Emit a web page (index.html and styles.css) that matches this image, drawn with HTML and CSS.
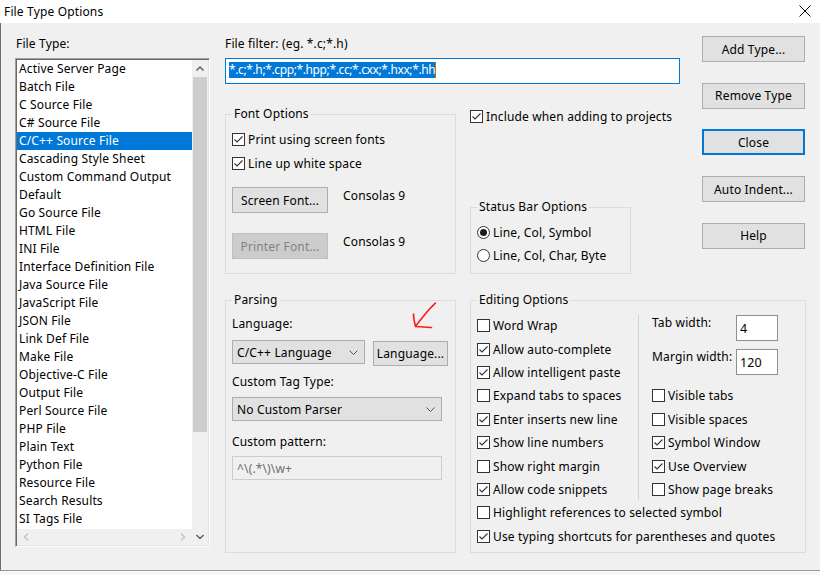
FILE: index.html
```html
<!DOCTYPE html>
<html>
<head>
<meta charset="utf-8">
<link rel="stylesheet" href="styles.css">
</head>
<body>
<div class="titlebar">
  <span class="title">File Type Options</span>
  <svg class="close" width="12" height="12" viewBox="0 0 12 12"><path d="M0.5 0.5 L11.5 11.5 M11.5 0.5 L0.5 11.5" stroke="#000" stroke-width="1" fill="none"/></svg>
</div>
<div class="main">
  <div class="col-left">
    <div class="lbl">File Type:</div>
    <div class="list">
      <div class="list-body">
        <div class="items">
          <div class="item">Active Server Page</div>
          <div class="item">Batch File</div>
          <div class="item">C Source File</div>
          <div class="item">C# Source File</div>
          <div class="item sel">C/C++ Source File</div>
          <div class="item">Cascading Style Sheet</div>
          <div class="item">Custom Command Output</div>
          <div class="item">Default</div>
          <div class="item">Go Source File</div>
          <div class="item">HTML File</div>
          <div class="item">INI File</div>
          <div class="item">Interface Definition File</div>
          <div class="item">Java Source File</div>
          <div class="item">JavaScript File</div>
          <div class="item">JSON File</div>
          <div class="item">Link Def File</div>
          <div class="item">Make File</div>
          <div class="item">Objective-C File</div>
          <div class="item">Output File</div>
          <div class="item">Perl Source File</div>
          <div class="item">PHP File</div>
          <div class="item">Plain Text</div>
          <div class="item">Python File</div>
          <div class="item">Resource File</div>
          <div class="item">Search Results</div>
          <div class="item">SI Tags File</div>
        </div>
        <div class="hscroll">
          <svg class="harrow" width="16" height="16" viewBox="0 0 16 16"><path d="M10 4.5 L6.5 8 L10 11.5" stroke="#c4c4c4" stroke-width="1.5" fill="none"/></svg>
          <svg class="harrow" width="16" height="16" viewBox="0 0 16 16"><path d="M6 4.5 L9.5 8 L6 11.5" stroke="#c4c4c4" stroke-width="1.5" fill="none"/></svg>
        </div>
      </div>
      <div class="vscroll">
        <svg class="vbtn up" width="16" height="17" viewBox="0 0 16 17"><path d="M4.5 10.5 L8 7 L11.5 10.5" stroke="#606060" stroke-width="1.5" fill="none"/></svg>
        <div class="thumb"></div>
        <div class="track"></div>
        <svg class="vbtn" width="16" height="16" viewBox="0 0 16 16"><path d="M4.5 6 L8 9.5 L11.5 6" stroke="#606060" stroke-width="1.5" fill="none"/></svg>
      </div>
    </div>
  </div>

  <div class="col-rest">
    <div class="rest-top">
      <div class="center-top">
        <div class="lbl">File filter: (eg. *.c;*.h)</div>
        <div class="filter"><span class="seltext">*.c;*.h;*.cpp;*.hpp;*.cc;*.cxx;*.hxx;*.hh</span></div>
        <div class="fo-row">
          <fieldset class="grp grp-font">
            <legend>Font Options</legend>
            <div class="chk fchk"><span class="cb"><svg viewBox="0 0 11 11"><path d="M1.5 5.5 L4 8 L9.5 2.5"/></svg></span>Print using screen fonts</div>
            <div class="chk fchk fchk2"><span class="cb"><svg viewBox="0 0 11 11"><path d="M1.5 5.5 L4 8 L9.5 2.5"/></svg></span>Line up white space</div>
            <div class="fontrow first">
              <div class="btn fbtn">Screen Font...</div>
              <span class="fontname">Consolas 9</span>
            </div>
            <div class="fontrow">
              <div class="btn fbtn disabled">Printer Font...</div>
              <span class="fontname">Consolas 9</span>
            </div>
          </fieldset>
          <div class="side">
            <div class="chk include"><span class="cb"><svg viewBox="0 0 11 11"><path d="M1.5 5.5 L4 8 L9.5 2.5"/></svg></span>Include when adding to projects</div>
            <fieldset class="grp grp-status">
              <legend>Status Bar Options</legend>
              <div class="chk radio"><span class="rb on"></span>Line, Col, Symbol</div>
              <div class="chk radio"><span class="rb"></span>Line, Col, Char, Byte</div>
            </fieldset>
          </div>
        </div>
      </div>
      <div class="buttons">
        <div class="btn rbtn">Add Type...</div>
        <div class="btn rbtn">Remove Type</div>
        <div class="btn rbtn default">Close</div>
        <div class="btn rbtn">Auto Indent...</div>
        <div class="btn rbtn">Help</div>
      </div>
    </div>

    <div class="rest-bottom">
      <fieldset class="grp grp-parse">
        <legend>Parsing</legend>
        <div class="plabel lang">Language:
          <svg class="annot" width="32" height="34" viewBox="0 0 32 34"><path d="M27.5 4 C25 6.5 22 9 18.5 13.5 C15 18 11 22.5 7.5 27.5 M5.5 15 C5.5 19 6.5 23.5 7.5 27.5 C12 27.5 17 28 23.5 28.5" stroke="#ff1a1a" stroke-width="1.6" fill="none" stroke-linecap="round" stroke-linejoin="round"/></svg>
        </div>
        <div class="langrow">
          <div class="combo combo-lang">C/C++ Language<svg class="chev" width="9" height="5" viewBox="0 0 9 5"><path d="M0.5 0.5 L4.5 4.5 L8.5 0.5" stroke="#555" stroke-width="1" fill="none"/></svg></div>
          <div class="btn langbtn">Language...</div>
        </div>
        <div class="plabel tag">Custom Tag Type:</div>
        <div class="combo combo-tag">No Custom Parser<svg class="chev" width="9" height="5" viewBox="0 0 9 5"><path d="M0.5 0.5 L4.5 4.5 L8.5 0.5" stroke="#555" stroke-width="1" fill="none"/></svg></div>
        <div class="plabel pat">Custom pattern:</div>
        <div class="pattern">^\(.*\)\w+</div>
      </fieldset>

      <fieldset class="grp grp-edit">
        <legend>Editing Options</legend>
        <div class="edit-top">
          <div class="edit-left">
            <div class="chk erow"><span class="cb"></span>Word Wrap</div>
            <div class="chk erow"><span class="cb"><svg viewBox="0 0 11 11"><path d="M1.5 5.5 L4 8 L9.5 2.5"/></svg></span>Allow auto-complete</div>
            <div class="chk erow"><span class="cb"><svg viewBox="0 0 11 11"><path d="M1.5 5.5 L4 8 L9.5 2.5"/></svg></span>Allow intelligent paste</div>
            <div class="chk erow"><span class="cb"></span>Expand tabs to spaces</div>
            <div class="chk erow"><span class="cb"><svg viewBox="0 0 11 11"><path d="M1.5 5.5 L4 8 L9.5 2.5"/></svg></span>Enter inserts new line</div>
            <div class="chk erow"><span class="cb"><svg viewBox="0 0 11 11"><path d="M1.5 5.5 L4 8 L9.5 2.5"/></svg></span>Show line numbers</div>
            <div class="chk erow"><span class="cb"></span>Show right margin</div>
            <div class="chk erow"><span class="cb"><svg viewBox="0 0 11 11"><path d="M1.5 5.5 L4 8 L9.5 2.5"/></svg></span>Allow code snippets</div>
          </div>
          <div class="vsep"></div>
          <div class="edit-right">
            <div class="numblock">
              <div class="numrow"><span class="numlbl">Tab width:</span><span class="num">4</span></div>
              <div class="numrow"><span class="numlbl">Margin width:</span><span class="num">120</span></div>
            </div>
            <div class="chk erow"><span class="cb"></span>Visible tabs</div>
            <div class="chk erow"><span class="cb"></span>Visible spaces</div>
            <div class="chk erow"><span class="cb"><svg viewBox="0 0 11 11"><path d="M1.5 5.5 L4 8 L9.5 2.5"/></svg></span>Symbol Window</div>
            <div class="chk erow"><span class="cb"><svg viewBox="0 0 11 11"><path d="M1.5 5.5 L4 8 L9.5 2.5"/></svg></span>Use Overview</div>
            <div class="chk erow"><span class="cb"></span>Show page breaks</div>
          </div>
        </div>
        <div class="chk erow"><span class="cb"></span>Highlight references to selected symbol</div>
        <div class="chk erow"><span class="cb"><svg viewBox="0 0 11 11"><path d="M1.5 5.5 L4 8 L9.5 2.5"/></svg></span>Use typing shortcuts for parentheses and quotes</div>
      </fieldset>
    </div>
  </div>
</div>
</body>
</html>
```

FILE: styles.css
```css
html, body {
  margin: 0;
  padding: 0;
}
body {
  width: 820px;
  height: 575px;
  overflow: hidden;
  background: #f7f7f7;
  font-family: "Noto Sans", "Liberation Sans", sans-serif;
  font-size: 12px;
  letter-spacing: 0.15px;
  color: #000;
}
.titlebar {
  height: 23px;
  background: #fff;
  display: flex;
  align-items: center;
  justify-content: space-between;
  padding: 0 9px 0 4px;
}
.title {
  font-size: 12px;
  line-height: 23px;
}
.close {
  display: block;
  margin-top: -1px;
}
.main {
  height: 548px;
  box-sizing: border-box;
  background: #f0f0f0;
  border-left: 1px solid #6e6e6e;
  border-bottom: 1px solid #9a9a9a;
  display: flex;
  padding: 13px 0 0 14px;
}
.lbl {
  line-height: 16px;
  height: 16px;
  white-space: nowrap;
}
.col-left .lbl {
  padding-left: 1px;
}

/* list box */
.list {
  margin-top: 6px;
  width: 195px;
  height: 489px;
  box-sizing: border-box;
  border-top: 1px solid #a0a0a0;
  border-left: 1px solid #a0a0a0;
  border-right: 1px solid #ffffff;
  border-bottom: 1px solid #ffffff;
  box-shadow: inset 1px 1px 0 #696969, inset -1px -1px 0 #e3e3e3;
  padding: 1px;
  display: flex;
  background: #fff;
}
.list-body {
  flex: 1;
  display: flex;
  flex-direction: column;
  min-width: 0;
}
.items {
  flex: 1;
  overflow: hidden;
}
.item {
  height: 18px;
  line-height: 18px;
  padding-left: 2px;
  white-space: nowrap;
}
.item.sel {
  background: #0078d7;
  color: #fff;
}
.hscroll {
  height: 16px;
  background: #f0f0f0;
  display: flex;
  justify-content: space-between;
  align-items: center;
  padding: 0 1px;
}
.harrow {
  display: block;
}
.vscroll {
  width: 16px;
  background: #f0f0f0;
  display: flex;
  flex-direction: column;
}
.vbtn {
  display: block;
  flex: none;
}
.thumb {
  height: 355px;
  background: #cdcdcd;
  margin: 0 1px;
  flex: none;
}
.track {
  flex: 1;
}

/* right part */
.col-rest {
  margin-left: 15px;
  display: flex;
  flex-direction: column;
}
.rest-top {
  display: flex;
}
.center-top {
  width: 455px;
}
.filter {
  margin-top: 6px;
  height: 26px;
  box-sizing: border-box;
  border: 1px solid #0078d7;
  background: #fff;
  padding: 3px 0 0 3px;
  display: flex;
  align-items: flex-start;
}
.seltext {
  background: #0078d7;
  color: #fff;
  line-height: 16px;
  letter-spacing: -0.38px;
  white-space: nowrap;
  border-right: 1px solid #c26a1c;
}
.fo-row {
  margin-top: 22px;
  display: flex;
}
.grp {
  margin: 0;
  border: 1px solid #dcdcdc;
  padding: 7px 6px 14px 6px;
  min-width: 0;
  box-sizing: border-box;
}
.grp legend {
  padding: 0 2px;
  line-height: 16px;
  white-space: nowrap;
}
.grp-font {
  width: 231px;
}
.chk {
  display: flex;
  align-items: center;
  white-space: nowrap;
}
.fchk {
  height: 20px;
}
.fchk2 {
  margin-top: 4px;
}
.cb {
  width: 13px;
  height: 13px;
  box-sizing: border-box;
  border: 1px solid #333;
  background: #fff;
  margin-right: 3px;
  flex: none;
  display: flex;
}
.cb svg {
  width: 11px;
  height: 11px;
  display: block;
}
.cb svg path {
  fill: none;
  stroke: #333;
  stroke-width: 1.1;
}
.rb {
  width: 13px;
  height: 13px;
  box-sizing: border-box;
  border: 1px solid #333;
  border-radius: 50%;
  background: #fff;
  margin-right: 3px;
  flex: none;
  display: flex;
  align-items: center;
  justify-content: center;
}
.rb.on::after {
  content: "";
  width: 7px;
  height: 7px;
  border-radius: 50%;
  background: #1e1e1e;
}
.fontrow {
  display: flex;
  align-items: flex-start;
  margin-top: 20px;
}
.fontrow.first {
  margin-top: 14px;
}
.fontname {
  margin-left: 15px;
  line-height: 16px;
  margin-top: 1px;
}
.btn {
  box-sizing: border-box;
  border: 1px solid #adadad;
  background: #e1e1e1;
  display: flex;
  align-items: center;
  justify-content: center;
  white-space: nowrap;
  flex: none;
}
.fbtn {
  width: 96px;
  height: 26px;
}
.btn.disabled {
  background: #cccccc;
  border-color: #bfbfbf;
  color: #838383;
}
.side {
  margin-left: 14px;
  display: flex;
  flex-direction: column;
  justify-content: space-between;
}
.include {
  height: 20px;
  margin-top: 0;
}
.grp-status {
  width: 161px;
  padding: 7px 6px 8px 6px;
}
.radio {
  height: 20px;
}
.radio + .radio {
  margin-top: 3px;
}
.buttons {
  margin-left: 22px;
  width: 103px;
  display: flex;
  flex-direction: column;
  gap: 20.7px;
}
.rbtn {
  height: 26px;
}
.rbtn.default {
  border: 2px solid #0078d7;
}

/* bottom */
.rest-bottom {
  margin-top: 18px;
  display: flex;
  align-items: stretch;
}
.grp-parse {
  width: 231px;
  padding: 8px 6px 0 6px;
}
.plabel {
  line-height: 16px;
  height: 16px;
  white-space: nowrap;
}
.lang {
  position: relative;
}
.annot {
  position: absolute;
  left: 176px;
  top: -17px;
}
.langrow {
  margin-top: 8px;
  display: flex;
  align-items: flex-start;
}
.combo {
  height: 24px;
  box-sizing: border-box;
  border: 1px solid #adadad;
  background: #e1e1e1;
  display: flex;
  align-items: center;
  justify-content: space-between;
  padding: 0 6px 0 4px;
  white-space: nowrap;
}
.combo-lang {
  width: 133px;
}
.langbtn {
  width: 75px;
  height: 25px;
  margin-left: 8px;
  margin-top: 1px;
}
.tag {
  margin-top: 8px;
}
.combo-tag {
  width: 210px;
  margin-top: 7px;
}
.pat {
  margin-top: 13px;
}
.pattern {
  margin-top: 6px;
  width: 210px;
  height: 24px;
  box-sizing: border-box;
  border: 1px solid #cccccc;
  background: #f0f0f0;
  color: #6d6d6d;
  padding-left: 4px;
  display: flex;
  align-items: center;
  white-space: nowrap;
}
.grp-edit {
  width: 336px;
  margin-left: 14px;
  padding: 6px 6px 4px 6px;
}
.edit-top {
  display: flex;
}
.edit-left {
  width: 161px;
  display: flex;
  flex-direction: column;
}
.erow {
  height: 23.4px;
}
.vsep {
  width: 1px;
  background: #d2d2d2;
  margin: 1px 0 1px 0;
}
.edit-right {
  padding-left: 13px;
  display: flex;
  flex-direction: column;
}
.numblock {
  height: 70.2px;
  box-sizing: border-box;
  padding-top: 1px;
  display: flex;
  flex-direction: column;
  gap: 8px;
}
.numrow {
  display: flex;
  align-items: flex-start;
}
.numlbl {
  width: 84px;
  line-height: 16px;
  white-space: nowrap;
}
.num {
  width: 42px;
  height: 26px;
  box-sizing: border-box;
  border: 1px solid #8f8f8f;
  background: #fff;
  padding-left: 3px;
  display: flex;
  align-items: center;
  font-size: 12.5px;
}
```
